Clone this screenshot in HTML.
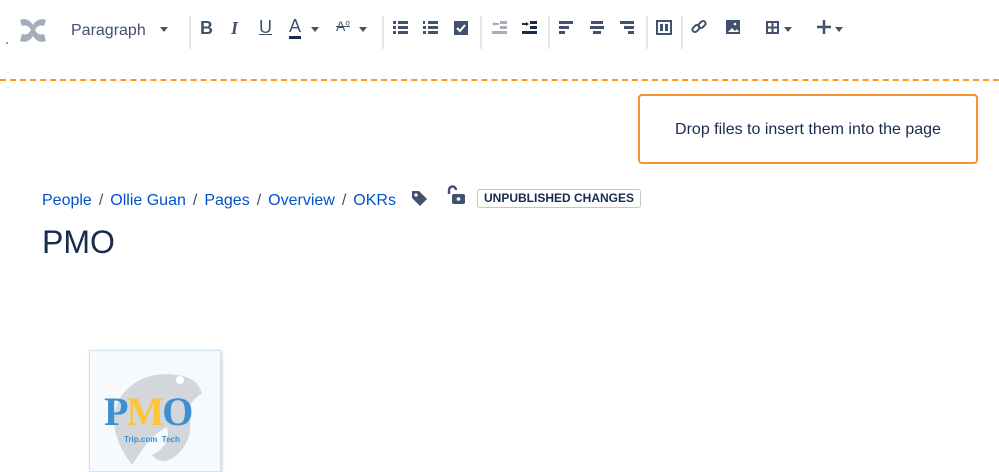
<!DOCTYPE html>
<html><head><style>
body{margin:0;width:999px;height:466px;background:#fff;position:relative;overflow:hidden;font-family:"Liberation Sans",sans-serif;}
.a{position:absolute}
.sep{position:absolute;top:16px;width:2px;height:33px;background:#e4e6ea}
.car{position:absolute;width:0;height:0;border-left:4px solid transparent;border-right:4px solid transparent;border-top:5px solid #42526e}
.bc{color:#0052cc;font-size:16px}
.sl{color:#42526e;font-size:16px;margin:0 7px}
</style></head><body>
<svg class="a" style="left:18px;top:16px" width="30" height="30" viewBox="0 0 30 30"><path d="M2 4 Q10 1 15 9 Q20 1 28 4 L26 10 Q20 8 17 14 Q20 20 26 18 L28 25 Q20 28 15 20 Q10 28 2 25 L4 18 Q10 20 13 14 Q10 8 4 10Z" fill="#a5adba"/></svg>
<div class="a" style="left:6px;top:42px;width:2px;height:2px;background:#999"></div>
<div class="a" style="left:71px;top:22px;font-size:16px;color:#42526e">Paragraph</div>
<div class="car" style="left:160px;top:27px"></div>
<div class="sep" style="left:189px"></div>
<div class="a" style="left:200px;top:18px;font-weight:bold;font-size:18px;color:#42526e">B</div>
<div class="a" style="left:231px;top:18px;font-style:italic;font-weight:bold;font-size:18px;color:#42526e;font-family:'Liberation Serif'">I</div>
<div class="a" style="left:259px;top:17px;font-size:18px;color:#42526e;text-decoration:underline">U</div>
<div class="a" style="left:289px;top:17px;font-size:18px;color:#42526e;border-bottom:3px solid #172b4d;line-height:19px">A</div>
<div class="car" style="left:311px;top:27px"></div>
<div class="a" style="left:336px;top:18px;font-size:14px;color:#42526e;text-decoration:line-through">A<sup style="font-size:8px">o</sup></div>
<div class="car" style="left:359px;top:27px"></div>
<div class="sep" style="left:382px"></div>
<svg class="a" style="left:393px;top:20px" width="16" height="14"><g fill="#42526e"><rect x="0" y="1" width="3" height="3"/><rect x="5" y="1" width="10" height="3"/><rect x="0" y="6" width="3" height="3"/><rect x="5" y="6" width="10" height="3"/><rect x="0" y="11" width="3" height="3"/><rect x="5" y="11" width="10" height="3"/></g></svg>
<svg class="a" style="left:423px;top:20px" width="16" height="14"><g fill="#42526e"><rect x="0" y="1" width="2" height="3"/><rect x="5" y="1" width="10" height="3"/><rect x="0" y="6" width="3" height="3"/><rect x="5" y="6" width="10" height="3"/><rect x="0" y="11" width="3" height="3"/><rect x="5" y="11" width="10" height="3"/></g></svg>
<svg class="a" style="left:454px;top:21px" width="14" height="14"><rect width="14" height="14" fill="#42526e"/><path d="M3 7l3 3 5-6" stroke="#fff" stroke-width="2" fill="none"/></svg>
<div class="sep" style="left:480px"></div>
<svg class="a" style="left:492px;top:20px" width="16" height="14"><g fill="#a5adba"><path d="M0 4l3-2v4z"/><rect x="3" y="3" width="4" height="2"/><rect x="8" y="1" width="7" height="3"/><rect x="8" y="6" width="7" height="3"/><rect x="0" y="11" width="15" height="3"/></g></svg>
<svg class="a" style="left:522px;top:20px" width="16" height="14"><g fill="#172b4d"><path d="M7 4l-3-2v4z"/><rect x="0" y="3" width="4" height="2"/><rect x="8" y="1" width="7" height="3"/><rect x="8" y="6" width="7" height="3"/><rect x="0" y="11" width="15" height="3"/></g></svg>
<div class="sep" style="left:548px"></div>
<svg class="a" style="left:559px;top:21px" width="14" height="13"><g fill="#42526e"><rect y="0" width="14" height="3"/><rect y="5" width="10" height="3"/><rect y="10" width="6" height="3"/></g></svg>
<svg class="a" style="left:590px;top:21px" width="14" height="13"><g fill="#42526e"><rect x="1" y="0" width="12" height="3"/><rect x="0" y="5" width="14" height="3"/><rect x="3" y="10" width="8" height="3"/></g></svg>
<svg class="a" style="left:620px;top:21px" width="14" height="13"><g fill="#42526e"><rect y="0" width="14" height="3"/><rect x="4" y="5" width="10" height="3"/><rect x="8" y="10" width="6" height="3"/></g></svg>
<div class="sep" style="left:646px"></div>
<svg class="a" style="left:656px;top:20px" width="16" height="15"><rect x="1" y="1" width="14" height="13" fill="none" stroke="#42526e" stroke-width="2"/><rect x="4" y="4" width="3" height="7" fill="#42526e"/><rect x="9" y="4" width="3" height="7" fill="#42526e"/></svg>
<div class="sep" style="left:681px"></div>
<svg class="a" style="left:691px;top:19px" width="16" height="16"><g fill="none" stroke="#42526e" stroke-width="2"><rect x="1" y="7" width="8" height="5" rx="2.5" transform="rotate(-45 5 9.5)"/><rect x="7" y="3" width="8" height="5" rx="2.5" transform="rotate(-45 11 5.5)"/></g></svg>
<svg class="a" style="left:726px;top:20px" width="14" height="14"><rect width="14" height="14" fill="#42526e"/><path d="M2 12l4-4 3 3 2-2 2 3z" fill="#fff"/><circle cx="9" cy="4" r="1.3" fill="#fff"/></svg>
<svg class="a" style="left:766px;top:21px" width="13" height="13"><g fill="none" stroke="#42526e" stroke-width="2"><rect x="1" y="1" width="11" height="11"/><path d="M6.5 1v11M1 6.5h11"/></g></svg>
<div class="car" style="left:784px;top:27px"></div>
<svg class="a" style="left:817px;top:20px" width="14" height="14"><path d="M7 0v14M0 7h14" stroke="#42526e" stroke-width="2.5"/></svg>
<div class="car" style="left:835px;top:27px"></div>
<div class="a" style="left:0;top:79px;width:999px;height:0;border-top:2px dashed #ff991f"></div>
<div class="a" style="left:638px;top:94px;width:340px;height:70px;border:2px solid #f79232;border-radius:4px;box-sizing:border-box;background:#fff;font-size:16px;color:#172b4d;text-align:center;line-height:68px">Drop files to insert them into the page</div>
<div class="a" style="left:42px;top:192px;white-space:nowrap"><span class="bc">People</span><span class="sl">/</span><span class="bc">Ollie Guan</span><span class="sl">/</span><span class="bc">Pages</span><span class="sl">/</span><span class="bc">Overview</span><span class="sl">/</span><span class="bc">OKRs</span></div>
<svg class="a" style="left:410px;top:189px" width="20" height="20"><path d="M2 2h7l8 8-7 7-8-8z" fill="#42526e"/><circle cx="6" cy="6" r="1.6" fill="#fff"/></svg>
<svg class="a" style="left:446px;top:185px" width="20" height="20"><path d="M3 9V5a3.5 3.5 0 017 0" fill="none" stroke="#42526e" stroke-width="2.4"/><rect x="6" y="9" width="13" height="10" rx="2" fill="#42526e"/><circle cx="12.5" cy="14" r="1.8" fill="#fff"/></svg>
<div class="a" style="left:477px;top:189px;border:1px solid #c1c7d0;border-radius:3px;padding:1px 6px;font-size:12px;font-weight:bold;color:#172b4d;line-height:15px">UNPUBLISHED CHANGES</div>
<div class="a" style="left:42px;top:224px;font-size:32px;color:#172b4d">PMO</div>
<div class="a" style="left:89px;top:350px;width:130px;height:120px;border:1px solid #cfe3f0;box-shadow:1px 1px 3px #ccc;background:#f7fafc"></div>
<svg class="a" style="left:92px;top:355px" width="124" height="111"><path d="M40 110 Q10 70 30 40 Q50 15 85 20 Q105 22 110 38 Q100 45 95 55 Q105 80 85 100 Q70 112 60 100 Q80 90 75 72 Q60 80 50 95Z" fill="#d3d6da"/><circle cx="88" cy="25" r="4" fill="#fff"/></svg>
<div class="a" style="left:104px;top:388px;font-family:'Liberation Serif';font-weight:bold;font-size:40px;letter-spacing:-2px;line-height:48px"><span style="color:#3d8fd0">P</span><span style="color:#fcc43b">M</span><span style="color:#3d8fd0">O</span></div>
<div class="a" style="left:124px;top:435px;font-size:8px;font-weight:bold;color:#3d8fd0">Trip.com&nbsp; Tech</div>
</body></html>
